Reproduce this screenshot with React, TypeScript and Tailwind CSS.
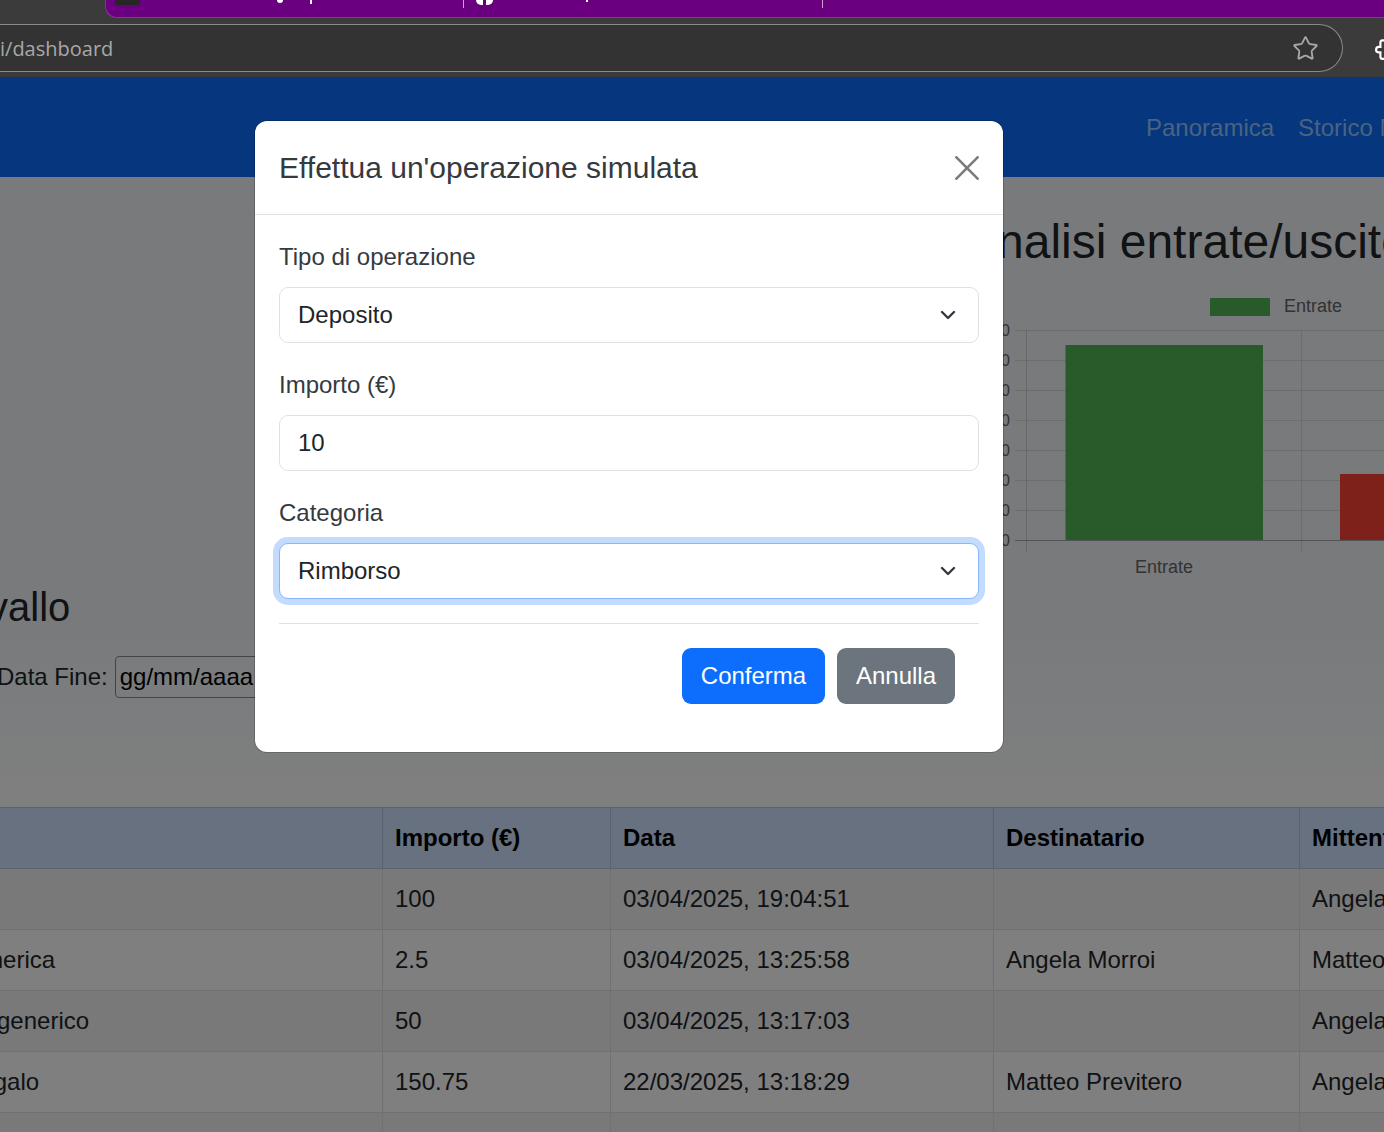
import React from 'react';
import { ChevronDown, Star } from 'lucide-react';

const rows = [
  { tipo: '', tipoClass: '', importo: '100', data: '03/04/2025, 19:04:51', dest: '', mitt: 'Angela Morroi' },
  { tipo: 'generica', tipoClass: 'ml-[-37px]', importo: '2.5', data: '03/04/2025, 13:25:58', dest: 'Angela Morroi', mitt: 'Matteo Previtero' },
  { tipo: 'generico', tipoClass: 'ml-[-3px]', importo: '50', data: '03/04/2025, 13:17:03', dest: '', mitt: 'Angela Morroi' },
  { tipo: 'Regalo', tipoClass: 'ml-[-37px]', importo: '150.75', data: '22/03/2025, 13:18:29', dest: 'Matteo Previtero', mitt: 'Angela Morroi' },
  { tipo: '', tipoClass: '', importo: '', data: '', dest: '', mitt: '' },
];

const gridLines = [330, 360, 390, 420, 450, 480, 510, 540];

const Chart: React.FC = () => (
  <svg width="381" height="300" viewBox="1003 290 381 300" className="block">
    {gridLines.map((y) => (
      <g key={y}>
        <line x1="1015" x2="1384" y1={y + 0.5} y2={y + 0.5} stroke="#000" strokeOpacity="0.1" />
        <text x="1005.5" y={y + 6} fontSize="16" fill="#666" textAnchor="middle" fontFamily="Liberation Sans, Arial, sans-serif">0</text>
      </g>
    ))}
    <line x1="1026.5" x2="1026.5" y1="330" y2="552" stroke="#000" strokeOpacity="0.15" />
    <line x1="1301.5" x2="1301.5" y1="330" y2="552" stroke="#000" strokeOpacity="0.1" />
    <line x1="1015" x2="1384" y1="540.5" y2="540.5" stroke="#000" strokeOpacity="0.25" />
    <rect x="1065.5" y="345" width="197.5" height="195" fill="#50b454" />
    <rect x="1340" y="474" width="44" height="66" fill="#fc4234" />
    <rect x="1210" y="298" width="60" height="18" fill="#50b454" />
    <text x="1284" y="312" fontSize="18" fill="#666" fontFamily="Liberation Sans, Arial, sans-serif">Entrate</text>
    <text x="1164" y="573" fontSize="18" fill="#666" textAnchor="middle" fontFamily="Liberation Sans, Arial, sans-serif">Entrate</text>
  </svg>
);

const Field: React.FC<{ label: string; value: string; select?: boolean; focus?: boolean }> = ({ label, value, select, focus }) => (
  <div className="mb-[24px] last:mb-0">
    <div className="mb-[12px] h-[36px] text-[24px] leading-[36px] text-[#343a40]">{label}</div>
    <div
      className={`flex h-[56px] items-center justify-between rounded-[9px] border bg-white pl-[18px] pr-[18px] text-[24px] text-[#212529] ${
        focus ? 'border-[#86b7fe] shadow-[0_0_0_6px_rgba(13,110,253,0.25)]' : 'border-[#dee2e6]'
      }`}
    >
      <span>{value}</span>
      {select && <ChevronDown size={24} strokeWidth={2.4} className="text-[#343a40]" />}
    </div>
  </div>
);

const App: React.FC = () => {
  return (
    <div className="relative h-[1132px] w-[1384px] overflow-hidden bg-white font-['Liberation_Sans',Arial,sans-serif]">
      {/* browser chrome */}
      <div className="h-[77px] bg-[#3b3b3b]">
        <div className="ml-[105px] flex h-[18px] items-start rounded-bl-[12px] border-b border-l border-[#9a2a9a] bg-[#6a0080]">
          <div className="ml-[9px] h-[5px] w-[25px] rounded-b-[3px] bg-[#262626]" />
          <div className="ml-[137px] h-[3px] w-[6px] rounded-b-full bg-white" />
          <div className="ml-[27px] h-[4px] w-[2px] bg-white" />
          <div className="ml-[151px] h-[8px] w-px bg-[#c9a6d0]" />
          <div className="ml-[12px] h-[5px] w-[7px] rounded-bl-full bg-white" />
          <div className="ml-[3px] h-[5px] w-[7px] rounded-br-full bg-white" />
          <div className="ml-[93px] h-[2px] w-[2px] bg-white" />
          <div className="ml-[234px] h-[8px] w-px bg-[#c9a6d0]" />
        </div>
        <div className="flex items-start justify-between pt-[6px]">
          <div className="flex h-[48px] w-[1343px] items-center justify-between rounded-r-[24px] border border-l-0 border-[#8a8a8a] bg-[#333333] pr-[23px]">
            <span className="mt-[1px] font-['Open_Sans',sans-serif] text-[20px] text-[#a8a8a8]">i/dashboard</span>
            <Star size={27} strokeWidth={1.6} className="text-[#a8a8a8]" />
          </div>
          <svg width="26" height="26" viewBox="0 0 24 24" fill="none" stroke="#ffffff" strokeWidth="2" className="mr-[-17px] mt-[11px] -scale-x-100">
            <path d="M20.5 11H19V7c0-1.1-.9-2-2-2h-4V3.5a2.5 2.5 0 0 0-5 0V5H4c-1.1 0-2 .9-2 2v3.8h1.5a2.7 2.7 0 0 1 0 5.4H2V20c0 1.1.9 2 2 2h3.8v-1.5a2.7 2.7 0 0 1 5.4 0V22H17c1.1 0 2-.9 2-2v-4h1.5a2.5 2.5 0 0 0 0-5z" />
          </svg>
        </div>
      </div>

      {/* page under the backdrop */}
      <div className="bg-[#0a6cfc]">
        <div className="flex h-[100px] items-center justify-start gap-[24px] pl-[1146px] pt-[2px] text-[24px] text-[#90c8ff] whitespace-nowrap">
          <span>Panoramica</span>
          <span>Storico Movimenti</span>
        </div>
      </div>
      <div className="h-[630px] bg-linear-to-b from-[#f0f5f9] via-[#f0f5f9] via-70% to-white">
        <div className="flex h-[630px] w-[1384px]">
          <div className="w-[1003px] shrink-0 overflow-hidden">
            <div className="ml-[-92px] mt-[397px] text-[40px] leading-[66px] text-[#212529]">Intervallo</div>
            <div className="ml-[-3px] mt-[16px] flex items-center text-[24px] text-[#212529]">
              <span>Data Fine:</span>
              <div className="ml-[7px] flex h-[42px] w-[170px] items-center rounded-[4px] border border-[#888] pl-[4px] text-black">gg/mm/aaaa</div>
            </div>
          </div>
          <div className="w-[381px] shrink-0 overflow-hidden">
            <div className="ml-[-6px] mt-[32px] whitespace-nowrap text-[48px] leading-[66px] text-[#212529]">nalisi entrate/uscite</div>
            <div className="mt-[15px]">
              <Chart />
            </div>
          </div>
        </div>
      </div>

      <table className="w-[1384px] table-fixed border-collapse text-[24px] text-[#212529]">
        <colgroup>
          <col className="w-[382px]" />
          <col className="w-[228px]" />
          <col className="w-[383px]" />
          <col className="w-[306px]" />
          <col className="w-[85px]" />
        </colgroup>
        <thead>
          <tr className="h-[61px] bg-[#cfe2ff] text-left text-black">
            {['', 'Importo (€)', 'Data', 'Destinatario', 'Mittente'].map((h, i) => (
              <th key={i} className="overflow-hidden whitespace-nowrap border border-[#b8c6dc] px-[12.5px] font-bold first:border-l-0">{h}</th>
            ))}
          </tr>
        </thead>
        <tbody>
          {rows.map((r, i) => (
            <tr key={i} className={`h-[61px] ${i % 2 === 0 ? 'bg-[#f2f2f2]' : 'bg-white'}`}>
              <td className="overflow-hidden whitespace-nowrap border border-l-0 border-[#dee2e6] text-left">
                <div className={r.tipoClass}>{r.tipo}</div>
              </td>
              <td className="overflow-hidden whitespace-nowrap border border-[#dee2e6] px-[12.5px]">{r.importo}</td>
              <td className="overflow-hidden whitespace-nowrap border border-[#dee2e6] px-[12.5px]">{r.data}</td>
              <td className="overflow-hidden whitespace-nowrap border border-[#dee2e6] px-[12.5px]">{r.dest}</td>
              <td className="overflow-hidden whitespace-nowrap border border-[#dee2e6] px-[12.5px]">{r.mitt}</td>
            </tr>
          ))}
        </tbody>
      </table>

      {/* backdrop + modal */}
      <div className="absolute inset-x-0 bottom-0 top-[77px] bg-black/50" />
      <div className="absolute left-[255px] top-[121px] w-[748px] rounded-[12px] bg-white shadow-[0_0_0_1px_rgba(0,0,0,0.175)]">
        <div className="flex h-[94px] items-center justify-between border-b border-[#dee2e6] pl-[24px] pr-[24px]">
          <span className="text-[30px] text-[#343a40]">Effettua un'operazione simulata</span>
          <svg width="24" height="24" viewBox="0 0 24 24" stroke="#7b7b7b" strokeWidth="2.6">
            <path d="M0.5 0.5L23.5 23.5M23.5 0.5L0.5 23.5" />
          </svg>
        </div>
        <div className="px-[24px] pt-[24px]">
          <Field label="Tipo di operazione" value="Deposito" select />
          <Field label="Importo (€)" value="10" />
          <Field label="Categoria" value="Rimborso" select focus />
          <div className="mt-[24px] flex justify-end gap-[12px] border-t border-[#dee2e6] pb-[48px] pr-[24px] pt-[24px]">
            <div className="flex h-[56px] w-[143px] items-center justify-center rounded-[9px] bg-[#0d6efd] text-[24px] text-white">Conferma</div>
            <div className="flex h-[56px] w-[118px] items-center justify-center rounded-[9px] bg-[#6c757d] text-[24px] text-white">Annulla</div>
          </div>
        </div>
      </div>
    </div>
  );
};

export default App;
